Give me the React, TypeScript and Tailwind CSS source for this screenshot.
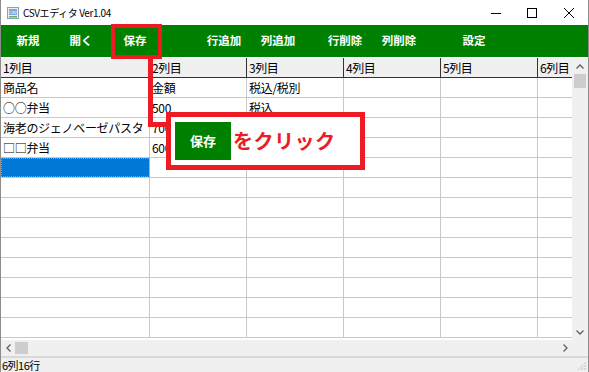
import React from 'react';

const cols = [149, 97, 97, 97, 97, 97];
const headers = ['1列目', '2列目', '3列目', '4列目', '5列目', '6列目'];
const data: string[][] = [
  ['商品名', '金額', '税込/税別'],
  ['○○弁当', '500', '税込'],
  ['海老のジェノベーゼパスタ', '700'],
  ['□□弁当', '600'],
  [],
  [],
  [],
  [],
  [],
  [],
  [],
  [],
  [],
];

// centred labels, left margins measured from the screenshot
const tools = [
  { label: '新規', ml: 'ml-[3px]' },
  { label: '開く', ml: 'ml-[5px]' },
  { label: '保存', ml: 'ml-[6px]' },
  { label: '行追加', ml: 'ml-[41px]' },
  { label: '列追加', ml: 'ml-[6px]' },
  { label: '行削除', ml: 'ml-[19px]' },
  { label: '列削除', ml: 'ml-[6px]' },
  { label: '設定', ml: 'ml-[27px]' },
];

const AppIcon = () => (
  <svg width="12" height="12" viewBox="0 0 12 12">
    <rect x="0.5" y="0.5" width="11" height="11" fill="#e8eef4" stroke="#8aa0b8" />
    <rect x="2" y="2" width="8" height="6" fill="#7fa8d8" />
    <text x="6" y="6.8" fontSize="3.6" textAnchor="middle" fill="#fff" fontFamily="Liberation Sans, sans-serif">CSV</text>
    <rect x="2" y="9" width="8" height="1.5" fill="#6cae5a" />
  </svg>
);

export default function App() {
  return (
    <div className="relative w-[589px] h-[372px] bg-white border-x border-[#8c8c8c] flex flex-col overflow-hidden font-['Noto_Sans_CJK_JP',sans-serif] text-black">
      {/* title bar */}
      <div className="h-[25px] flex items-center shrink-0">
        <div className="ml-[6px] mt-[1px]"><AppIcon /></div>
        <span className="ml-[4px] text-[10px] tracking-[-0.4px]">CSVエディタ Ver1.04</span>
        <div className="ml-auto flex items-center h-full">
          <div className="w-[36px] flex justify-center">
            <svg width="10" height="10" viewBox="0 0 10 10"><line x1="0" y1="5.5" x2="10" y2="5.5" stroke="#000" strokeWidth="1" /></svg>
          </div>
          <div className="w-[36px] flex justify-center">
            <svg width="10" height="10" viewBox="0 0 10 10"><rect x="0.5" y="0.5" width="9" height="9" fill="none" stroke="#000" strokeWidth="1" /></svg>
          </div>
          <div className="w-[38px] flex justify-center">
            <svg width="10" height="10" viewBox="0 0 10 10"><path d="M0 0 L10 10 M10 0 L0 10" stroke="#000" strokeWidth="1" /></svg>
          </div>
        </div>
      </div>

      {/* toolbar */}
      <div className="h-[32px] bg-[#008000] flex items-center shrink-0">
        {tools.map((t, i) => (
          <div key={i} className={`${t.ml} w-[48px] text-center text-white font-bold text-[11.5px] whitespace-nowrap`}>{t.label}</div>
        ))}
      </div>

      {/* grid + vertical scroll */}
      <div className="flex h-[283px] shrink-0 pt-[1px]">
        <div className="flex-1 overflow-hidden bg-white">
          <div className="flex h-[20px] bg-[#f0f0f0] border-b border-[#333]">
            {headers.map((h, i) => (
              <div
                key={i}
                style={{ width: cols[i] }}
                className="shrink-0 h-full border-r border-[#333] text-[12px] leading-[19px] pl-[2px] tracking-[-0.5px]"
              >
                {h}
              </div>
            ))}
          </div>
          {data.map((row, r) => (
            <div key={r} className="flex h-[20px] border-b border-[#c8c8c8]">
              {cols.map((w, c) => (
                <div
                  key={c}
                  style={{ width: w }}
                  className={`shrink-0 h-full border-r border-[#c8c8c8] text-[12px] leading-[19px] pl-[2px] whitespace-nowrap overflow-hidden tracking-[-0.3px] ${
                    r === 4 && c === 0 ? 'bg-[#0078d7] outline-1 outline-dotted outline-[#e08a3a] -outline-offset-1' : ''
                  }`}
                >
                  {row[c] ?? ''}
                </div>
              ))}
            </div>
          ))}
        </div>
        <div className="w-[16px] bg-[#f0f0f0] flex flex-col items-center shrink-0">
          <div className="h-[16px] flex items-center justify-center">
            <svg width="8" height="5" viewBox="0 0 8 5"><path d="M0.5 4.5 L4 1 L7.5 4.5" fill="none" stroke="#606060" strokeWidth="1.3" /></svg>
          </div>
          <div className="w-[12px] h-[14px] bg-[#cdcdcd]" />
          <div className="mt-auto h-[16px] flex items-center justify-center">
            <svg width="8" height="5" viewBox="0 0 8 5"><path d="M0.5 0.5 L4 4 L7.5 0.5" fill="none" stroke="#606060" strokeWidth="1.3" /></svg>
          </div>
        </div>
      </div>

      {/* horizontal scroll */}
      <div className="flex h-[16px] bg-[#f0f0f0] shrink-0">
        <div className="flex-1 flex items-center">
          <div className="w-[14px] flex justify-center">
            <svg width="5" height="8" viewBox="0 0 5 8"><path d="M4.5 0.5 L1 4 L4.5 7.5" fill="none" stroke="#606060" strokeWidth="1.3" /></svg>
          </div>
          <div className="w-[13px] h-[12px] bg-[#cdcdcd]" />
          <div className="ml-auto w-[14px] flex justify-center">
            <svg width="5" height="8" viewBox="0 0 5 8"><path d="M0.5 0.5 L4 4 L0.5 7.5" fill="none" stroke="#606060" strokeWidth="1.3" /></svg>
          </div>
        </div>
        <div className="w-[16px]" />
      </div>

      {/* status bar */}
      <div className="flex-1 bg-[#f0f0f0] border-t-2 border-t-[#d9d9d9] flex items-center relative">
        <span className="pl-[1px] text-[11px] leading-none tracking-[-0.5px]">6列16行</span>
        <svg className="absolute right-[1px] bottom-[1px]" width="12" height="12" viewBox="0 0 12 12">
          <path d="M11 3 L3 11 M11 6 L6 11 M11 9 L9 11" stroke="#a0a0a0" strokeWidth="1" strokeDasharray="1 1" />
        </svg>
      </div>

      {/* highlight around 保存 */}
      <div className="absolute left-[110px] top-[24px] w-[51px] h-[35px] border-4 border-[#ed1c24]" />
      {/* connector line */}
      <div className="absolute left-[147px] top-[58px] w-[5px] h-[69px] bg-[#ed1c24]" />
      <div className="absolute left-[147px] top-[122px] w-[20px] h-[5px] bg-[#ed1c24]" />
      {/* callout */}
      <div className="absolute left-[165px] top-[112px] w-[199px] h-[58px] border-[5px] border-[#ed1c24] bg-white flex items-center pl-[4px]">
        <div className="w-[56px] h-[38px] bg-[#008000] flex items-center justify-center text-white font-bold text-[13px]">保存</div>
        <span className="ml-[2px] text-[#ed1c24] font-bold text-[20px] tracking-[0.5px]">をクリック</span>
      </div>
    </div>
  );
}
